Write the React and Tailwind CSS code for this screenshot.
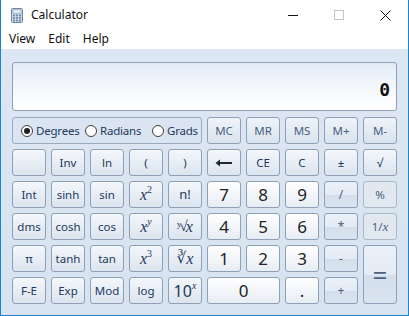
import React from "react";

const sans = { fontFamily: '"Noto Sans", "Open Sans", sans-serif' };
const serif = { fontFamily: '"Liberation Serif", "DejaVu Serif", serif' };

const base =
  "flex items-center justify-center rounded-[3px] border leading-none select-none";

const kinds = {
  fn: "border-[#8fa0b6] bg-gradient-to-b from-[#f4f7fb] to-[#dbe4ef] text-[#1e395b] text-[11.5px]",
  mem: "border-[#8fa0b6] bg-gradient-to-b from-[#eef3f9] to-[#d9e3ee] text-[#4a6180] text-[11.5px]",
  num: "border-[#8fa0b6] bg-gradient-to-b from-[#ffffff] to-[#e7edf4] text-[#222] text-[17px]",
  op: "border-[#8fa0b6] bg-[linear-gradient(to_bottom,#eaf0f7_0%,#e4ebf4_50%,#d4dfec_51%,#dae4ef_100%)] text-[#4a6180] text-[12px]",
  dim: "border-[#a9b7c8] bg-[#e1e8f0] text-[#4a6180] text-[11.5px]",
};

const Btn = ({ kind = "fn", className = "", children }) => (
  <div className={`${base} ${kinds[kind]} ${className}`} style={sans}>
    {children}
  </div>
);

const X = () => (
  <i className="text-[16px]" style={serif}>
    x
  </i>
);

const Radio = ({ label, checked, className = "" }) => (
  <div className={`flex items-center gap-[3px] ${className}`}>
    <div className="flex h-[12px] w-[12px] items-center justify-center rounded-full border border-[#3c3c3c] bg-white">
      {checked && <div className="h-[6px] w-[6px] rounded-full bg-[#1f1f1f]" />}
    </div>
    <span className="text-[11.5px] tracking-[-0.2px] text-[#1e395b]">{label}</span>
  </div>
);

export default function App() {
  return (
    <div
      className="flex h-[316px] w-[409px] flex-col border-x border-b border-[#1883d7] bg-white"
      style={sans}
    >
      {/* title bar */}
      <div className="flex h-[30px] items-center">
        <svg width="12" height="15" viewBox="0 0 12 15" className="ml-[10px]">
          <rect x="0.5" y="0.5" width="11" height="14" rx="1" fill="#c9d6e6" stroke="#6f86a3" />
          <rect x="2" y="2" width="8" height="3" fill="#eef4fb" stroke="#8aa0bb" strokeWidth="0.6" />
          {[0, 1, 2].map((r) =>
            [0, 1, 2].map((c) => (
              <rect key={`${r}${c}`} x={2 + c * 3} y={6.5 + r * 2.6} width="2" height="1.7" fill="#6e88aa" />
            ))
          )}
        </svg>
        <span className="ml-[8px] text-[12px] text-[#111]">Calculator</span>
        <div className="ml-auto flex h-full items-center">
          <div className="flex w-[46px] items-center justify-center">
            <div className="h-px w-[10px] bg-[#111]" />
          </div>
          <div className="flex w-[46px] items-center justify-center">
            <div className="h-[10px] w-[10px] border border-[#c4c4c4]" />
          </div>
          <div className="flex w-[46px] items-center justify-center">
            <svg width="11" height="11" viewBox="0 0 11 11">
              <path d="M0.5 0.5 L10.5 10.5 M10.5 0.5 L0.5 10.5" stroke="#111" strokeWidth="1" />
            </svg>
          </div>
        </div>
      </div>

      {/* menu */}
      <div className="flex h-[19px] items-start gap-[13px] pl-[8px] text-[12px] text-[#111]">
        <span>View</span>
        <span>Edit</span>
        <span>Help</span>
      </div>

      {/* body */}
      <div className="flex flex-1 flex-col bg-gradient-to-b from-[#dde7f3] to-[#d7e3f0] px-[11px] pt-[13px]">
        <div className="relative h-[49px] rounded-[3px] border border-[#8fa0b6] bg-gradient-to-b from-[#e2ebf6] via-[#f3f7fc] to-[#ffffff]">
          <span
            className="absolute right-[6px] bottom-[11px] text-[18px] font-bold leading-none text-[#111]"
            style={{ fontFamily: '"DejaVu Sans Mono", "Liberation Mono", monospace' }}
          >
            0
          </span>
        </div>

        <div className="mt-[6px] grid grid-cols-[repeat(10,34px)] grid-rows-[repeat(6,27px)] gap-x-[5px] gap-y-[5px]">
          <div className="col-span-5 flex items-center rounded-[3px] border border-[#9aaabe] bg-[#dbe5f1] pl-[8px]">
            <Radio label="Degrees" checked className="w-[64px]" />
            <Radio label="Radians" className="w-[67px]" />
            <Radio label="Grads" />
          </div>
          <Btn kind="mem">MC</Btn>
          <Btn kind="mem">MR</Btn>
          <Btn kind="mem">MS</Btn>
          <Btn kind="mem">M+</Btn>
          <Btn kind="mem">M-</Btn>

          {/* row 2 */}
          <Btn />
          <Btn>Inv</Btn>
          <Btn>ln</Btn>
          <Btn>(</Btn>
          <Btn>)</Btn>
          <Btn kind="fn">
            <svg width="18" height="8" viewBox="0 0 18 8">
              <path d="M2 4 H17" stroke="#1e2a3a" strokeWidth="2" />
              <path d="M0.5 4 L5 0.5 L5 7.5 Z" fill="#1e2a3a" />
            </svg>
          </Btn>
          <Btn>CE</Btn>
          <Btn>C</Btn>
          <Btn>±</Btn>
          <Btn>√</Btn>

          {/* row 3 */}
          <Btn>Int</Btn>
          <Btn>sinh</Btn>
          <Btn>sin</Btn>
          <Btn>
            <X />
            <sup className="text-[10px]" style={serif}>2</sup>
          </Btn>
          <Btn className="text-[13px]">n!</Btn>
          <Btn kind="num">7</Btn>
          <Btn kind="num">8</Btn>
          <Btn kind="num">9</Btn>
          <Btn kind="op">/</Btn>
          <Btn kind="dim">%</Btn>

          {/* row 4 */}
          <Btn>dms</Btn>
          <Btn>cosh</Btn>
          <Btn>cos</Btn>
          <Btn>
            <X />
            <sup className="text-[10px] italic" style={serif}>y</sup>
          </Btn>
          <Btn>
            <span className="text-[15px] tracking-[-2px]" style={serif}>ʸ√</span>
            <X />
          </Btn>
          <Btn kind="num">4</Btn>
          <Btn kind="num">5</Btn>
          <Btn kind="num">6</Btn>
          <Btn kind="op">*</Btn>
          <Btn kind="dim">
            <span>1/</span>
            <i className="text-[13px]" style={serif}>x</i>
          </Btn>

          {/* row 5 */}
          <Btn>π</Btn>
          <Btn>tanh</Btn>
          <Btn>tan</Btn>
          <Btn>
            <X />
            <sup className="text-[10px]" style={serif}>3</sup>
          </Btn>
          <Btn>
            <span className="text-[15px]" style={serif}>∛</span>
            <X />
          </Btn>
          <Btn kind="num">1</Btn>
          <Btn kind="num">2</Btn>
          <Btn kind="num">3</Btn>
          <Btn kind="op">-</Btn>
          <Btn kind="op" className="row-span-2 text-[26px]">=</Btn>

          {/* row 6 */}
          <Btn>F-E</Btn>
          <Btn>Exp</Btn>
          <Btn>Mod</Btn>
          <Btn>log</Btn>
          <Btn className="text-[16px]">
            10<sup className="text-[10px] italic" style={serif}>x</sup>
          </Btn>
          <Btn kind="num" className="col-span-2">0</Btn>
          <Btn kind="num">.</Btn>
          <Btn kind="op">+</Btn>
        </div>
      </div>
    </div>
  );
}
